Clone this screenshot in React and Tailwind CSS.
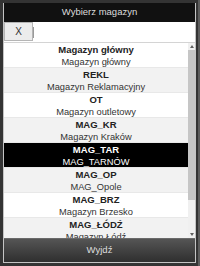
import React from 'react'

const rows = [
  { code: 'Magazyn główny', name: 'Magazyn główny' },
  { code: 'REKL', name: 'Magazyn Reklamacyjny' },
  { code: 'OT', name: 'Magazyn outletowy' },
  { code: 'MAG_KR', name: 'Magazyn Kraków' },
  { code: 'MAG_TAR', name: 'MAG_TARNÓW', selected: true },
  { code: 'MAG_OP', name: 'MAG_Opole' },
  { code: 'MAG_BRZ', name: 'Magazyn Brzesko' },
  { code: 'MAG_ŁÓDŹ', name: 'Magazyn Łódź' },
]

function Row({ row, index }) {
  const bg = row.selected ? 'bg-black text-white' : index % 2 === 1 ? 'bg-[#f2f2f2] text-[#222]' : 'bg-white text-[#222]'
  return (
    <div className={`h-[25px] shrink-0 flex flex-col items-center justify-center pt-[1px] leading-[12px] border-b border-[#e8e8e8] ${bg}`}>
      <div className="font-bold text-[9.5px]">{row.code}</div>
      <div className={`text-[9.3px] ${row.selected ? 'text-white' : 'text-[#333]'}`}>{row.name}</div>
    </div>
  )
}

export default function App() {
  return (
    <div className="w-[200px] h-[266px] bg-[#343434] pl-[3px] pr-[2px] pt-[3px] pb-[3px] overflow-hidden border-r-2 border-[#5c5c5c] font-['Liberation_Sans',Arial,sans-serif]">
      <div className="h-[260px] flex flex-col border-x border-b border-[#c4c4c4] bg-white">
        {/* header */}
        <div className="h-[19px] shrink-0 bg-[#111] text-[#dcdcdc] text-[9.5px] flex items-center justify-center">
          Wybierz magazyn
        </div>

        {/* search row */}
        <div className="h-[20px] shrink-0 flex bg-white">
          <button className="w-[29px] h-[19px] bg-[#ececec] border border-[#b5b5b5] text-[#333] text-[10px] flex items-center justify-center">
            X
          </button>
          <div className="flex-1 flex items-center">
            <div className="w-px h-[11px] bg-[#9a9a9a]" />
          </div>
        </div>
        <div className="h-px shrink-0 bg-[#d4d4d4]" />

        {/* list */}
        <div className="flex-1 flex min-h-0">
          <div className="flex-1 flex flex-col overflow-hidden">
            {rows.map((r, i) => (
              <Row key={r.code} row={r} index={i} />
            ))}
          </div>
          <div className="w-[7px] shrink-0 flex flex-col bg-[#f0f0f0]">
            <div className="h-[7px] flex items-center justify-center">
              <div className="w-0 h-0 border-x-[2.5px] border-x-transparent border-b-[3px] border-b-[#606060]" />
            </div>
            <div className="h-[150px] bg-[#c6c6c6]" />
            <div className="flex-1" />
            <div className="h-[7px] flex items-center justify-center">
              <div className="w-0 h-0 border-x-[2.5px] border-x-transparent border-t-[3px] border-t-[#606060]" />
            </div>
          </div>
        </div>

        {/* footer button */}
        <button className="h-[24px] shrink-0 bg-gradient-to-b from-[#555] to-[#2f2f2f] border-t border-[#6a6a6a] text-[#dedede] text-[9.5px] flex items-center justify-center">
          Wyjdź
        </button>
      </div>
    </div>
  )
}
